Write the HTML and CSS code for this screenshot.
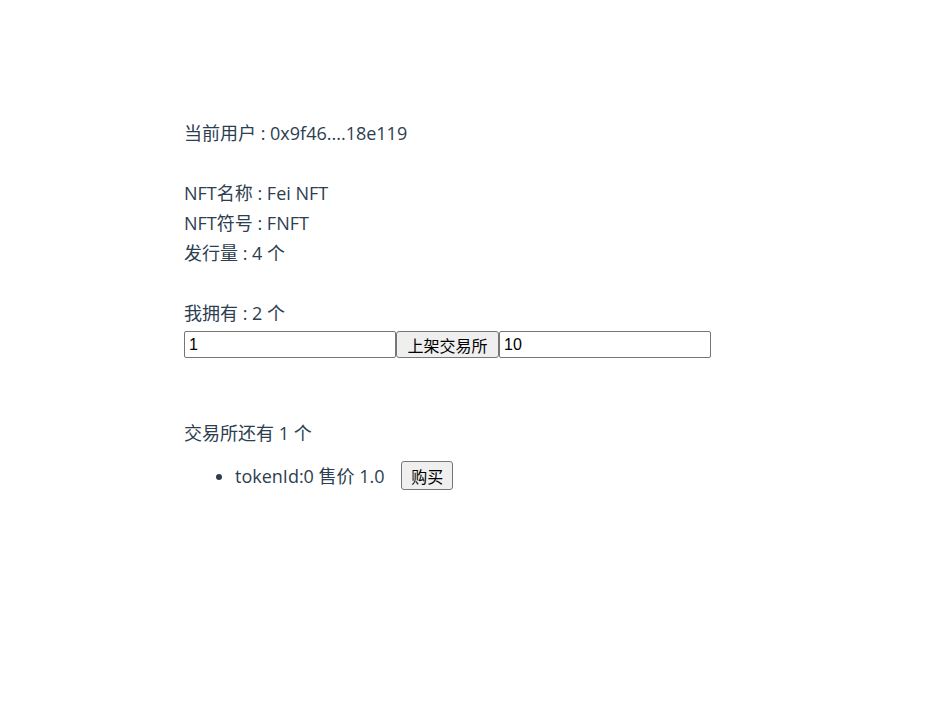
FILE: index.html
```html
<!DOCTYPE html>
<html>
<head>
<meta charset="utf-8">
<link rel="stylesheet" href="styles.css">
</head>
<body>
<div class="app">
  <div class="line">当前用户 : 0x9f46....18e119</div>
  <div class="line blank"></div>
  <div class="line">NFT名称 : Fei NFT</div>
  <div class="line">NFT符号 : FNFT</div>
  <div class="line">发行量 : 4 个</div>
  <div class="line blank"></div>
  <div class="line">我拥有 : 2 个</div>
  <div class="line row"><input class="field" value="1"><button class="btn">上架交易所</button><input class="field" value="10"></div>
  <div class="line blank"></div>
  <div class="line blank"></div>
  <div class="line">交易所还有 1 个</div>
  <ul class="list">
    <li class="item">tokenId:0 售价 1.0 <button class="btn buy">购买</button></li>
  </ul>
</div>
</body>
</html>
```
FILE: styles.css
```css
body {
  margin: 0;
}
.app {
  padding: 118px 0 0 184px;
  color: #2c3e50;
  font-family: "Open Sans", "Noto Sans CJK SC", sans-serif;
  font-size: 18px;
}
.line {
  line-height: 30px;
  height: 30px;
}
.row {
  box-sizing: border-box;
  display: flex;
  align-items: flex-start;
  padding-top: 3px;
}
.field {
  box-sizing: border-box;
  width: 212px;
  height: 27px;
  border: 1px solid #767676;
  border-radius: 2px;
  padding: 1px 4px;
  font-family: "Liberation Sans", "Noto Sans CJK SC", sans-serif;
  font-size: 16px;
  color: #000;
  margin: 0;
}
.btn {
  box-sizing: border-box;
  height: 27px;
  border: 1px solid #767676;
  border-radius: 3px;
  background: #efefef;
  padding: 0 10px;
  font-family: "Noto Sans CJK SC", sans-serif;
  font-size: 16px;
  line-height: 1;
  color: #000;
  margin: 0;
}
.row .btn {
  width: 103px;
}
.list {
  margin: 13px 0 0;
  padding-left: 51px;
}
.item {
  line-height: 26px;
}
.buy {
  margin-left: 12px;
  height: 29px;
  padding: 0 9px;
}
```
